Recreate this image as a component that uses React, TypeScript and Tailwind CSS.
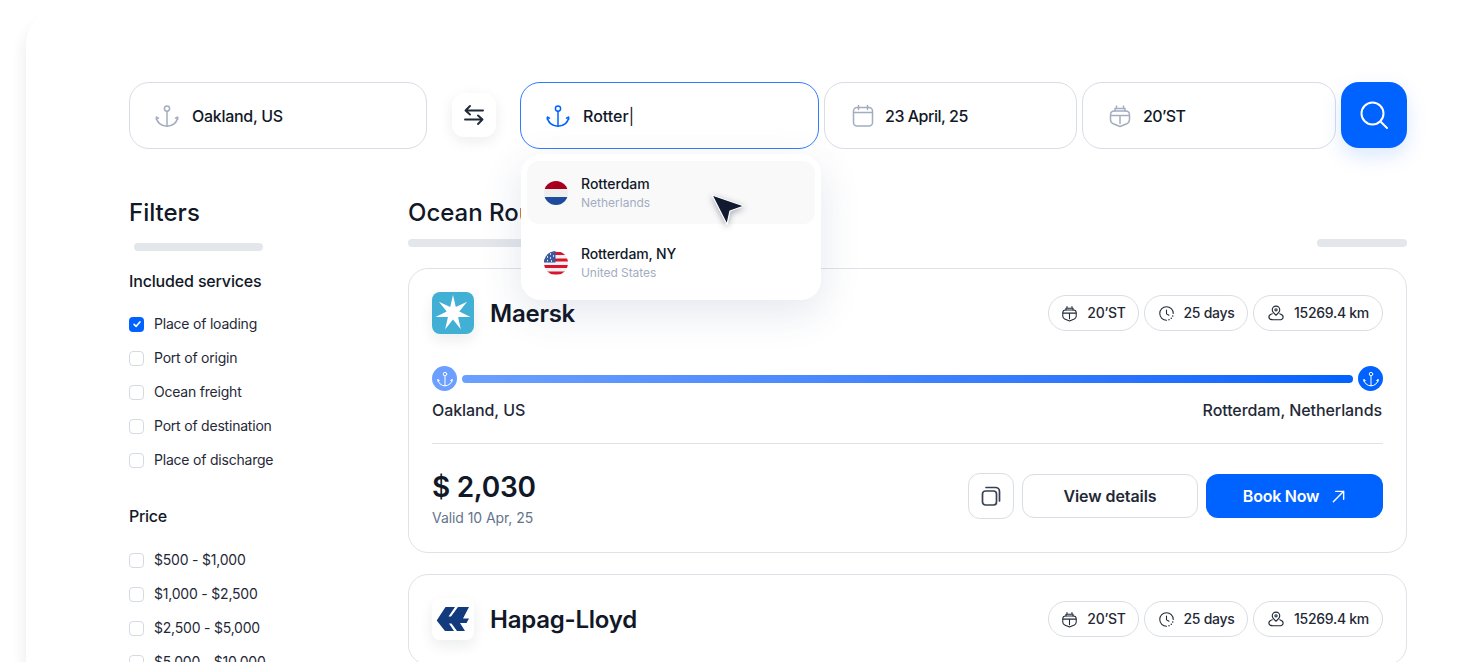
import React from "react";

type IP = { className?: string };
const Anchor = ({ className = "" }: IP) => (
  <svg viewBox="0 0 24 24" fill="none" stroke="currentColor" strokeWidth="1.5" strokeLinecap="round" strokeLinejoin="round" className={className}>
    <circle cx="12" cy="4.6" r="2.6" />
    <path d="M12 7.2V22.2" />
    <path d="M1.5 13.2a10.5 9 0 0 0 21 0" />
    <path d="M1.5 13.2l-.2 2M1.5 13.2l2 1M22.5 13.2l.2 2M22.5 13.2l-2 1" />
  </svg>
);
const Ship = ({ className = "" }: IP) => (
  <svg viewBox="0 0 24 24" fill="none" stroke="currentColor" strokeWidth="1.5" strokeLinecap="round" strokeLinejoin="round" className={className}>
    <path d="M2.500 11C2.500 8.500 4 7 6.500 7h11c2.500 0 4 1.500 4 4v4.500c0 2-1 3.400-2.700 4.200L12 22.500l-6.800-2.800C3.500 19 2.500 17.500 2.500 15.500z" />
    <path d="M7 7V4.500h10V7M8.500 2v2.500M15.500 2v2.500M12 11.500v8M3 11.500H21" />
  </svg>
);
const Calendar = ({ className = "" }: IP) => (
  <svg viewBox="0 0 24 24" fill="none" stroke="currentColor" strokeWidth="1.5" strokeLinecap="round" strokeLinejoin="round" className={className}>
    <rect x="2.500" y="3.500" width="19" height="18.500" rx="3.500" />
    <path d="M7.500 1.500v4M16.500 1.500v4M2.500 8.500h19" />
  </svg>
);
const ClockI = ({ className = "" }: IP) => (
  <svg viewBox="0 0 24 24" fill="none" stroke="currentColor" strokeWidth="1.5" strokeLinecap="round" strokeLinejoin="round" className={className}>
    <path d="M21.500 12A9.500 9.500 0 1 0 12 21.500" />
    <path d="M12 7v5.500l3.500 2" />
    <path d="M15.500 20.800l.1 0M18.700 18.700l.1 0M20.800 15.500l.1 0" strokeWidth="2" />
  </svg>
);
const Pin = ({ className = "" }: IP) => (
  <svg viewBox="0 0 24 24" fill="none" stroke="currentColor" strokeWidth="1.5" strokeLinecap="round" strokeLinejoin="round" className={className}>
    <path d="M12 15c-2.800-2.200-5-4.400-5-7.200a5 5 0 0 1 10 0c0 2.800-2.200 5-5 7.200z" />
    <circle cx="12" cy="7.800" r="1.500" />
    <path d="M7 13c-2.500.8-4.500 2.500-4.500 4.200C2.500 19.500 5 21 8 21h8c3 0 5.500-1.500 5.500-3.800C21.500 15.500 19.500 13.800 17 13" />
  </svg>
);

function Field({ icon, text, className, active, textClass = "" }: { icon: React.ReactNode; text: React.ReactNode; className: string; active?: boolean; textClass?: string }) {
  return (
    <div className={`flex h-[67px] items-center rounded-[20px] bg-white ${active ? "border-[1.5px] border-[#2f7bff]" : "border border-[#d8dce5]"} ${className}`}>
      {icon}
      <span className={`text-base font-medium text-[#111827] ${textClass}`}>{text}</span>
    </div>
  );
}

function Check({ label, checked }: { label: string; checked?: boolean }) {
  return (
    <div className="flex h-[34px] items-center gap-[10px]">
      {checked ? (
        <span className="flex h-[15px] w-[15px] items-center justify-center rounded-[4px] bg-[#0062ff]">
          <svg viewBox="0 0 12 12" className="h-[10px] w-[10px]" fill="none" stroke="white" strokeWidth="2" strokeLinecap="round" strokeLinejoin="round"><path d="M2.500 6.500 5 8.800 9.500 3.500" /></svg>
        </span>
      ) : (
        <span className="h-[15px] w-[15px] rounded-[4px] border border-[#d5d9e2] bg-white" />
      )}
      <span className="text-sm tracking-[-0.015em] text-[#1f2937]">{label}</span>
    </div>
  );
}

function Pills() {
  return (
    <div className="flex gap-[5px]">
      <div className="flex h-9 w-[91px] items-center justify-center gap-[9px] rounded-full border border-[#d9dde5] text-sm font-medium text-[#1f2937]"><Ship className="h-[17px] w-[17px]" />20’ST</div>
      <div className="flex h-9 w-[104px] items-center justify-center gap-[9px] rounded-full border border-[#d9dde5] text-sm font-medium text-[#1f2937]"><ClockI className="h-[17px] w-[17px]" />25 days</div>
      <div className="flex h-9 w-[130px] items-center justify-center gap-[9px] rounded-full border border-[#d9dde5] text-sm font-medium text-[#1f2937]"><Pin className="h-[18px] w-[18px]" />15269.4 km</div>
    </div>
  );
}

const Maersk = () => (
  <div className="flex h-[42px] w-[42px] items-center justify-center rounded-[8px] bg-[#42b0d5] shadow-[0_6px_14px_rgba(17,24,39,0.08)]">
    <svg viewBox="0 0 42 42" className="h-[42px] w-[42px]">
      <polygon fill="white" points="21,3 23.800,15.100 35.100,9.800 27.300,19.600 38.500,25 26.100,25.100 28.800,37.200 21,27.500 13.200,37.200 15.900,25.100 3.500,25 14.700,19.600 6.900,9.800 18.200,15.100" />
    </svg>
  </div>
);
const Hapag = () => (
  <div className="flex h-[42px] w-[42px] items-center justify-center rounded-[8px] bg-white shadow-[0_6px_14px_rgba(17,24,39,0.08)]">
    <svg viewBox="0 0 42 42" className="h-[42px] w-[42px]">
      <path fill="#123a7c" d="M4.700 22.500 13.500 9H23L16.500 18.500H19L26 9H37L31 20.500H37L34.500 25H28L33 33H25L19.500 25.500H17L22 33H13z" />
    </svg>
  </div>
);

function RouteCard({ logo, name, children }: { logo: React.ReactNode; name: string; children?: React.ReactNode }) {
  return (
    <div className="rounded-[20px] border border-[#dfe2e9] bg-white px-[23px] pt-[23px] pb-6">
      <div className="flex h-[42px] items-center">
        {logo}
        <span className="ml-4 mt-[2px] text-2xl font-semibold tracking-[-0.01em] text-[#111827]">{name}</span>
        <div className="ml-auto"><Pills /></div>
      </div>
      {children}
    </div>
  );
}

export default function App() {
  return (
    <div className="h-[662px] w-[1481px] overflow-hidden bg-white font-['Inter',sans-serif] tracking-[-0.018em]">
      <div className="relative ml-[26px] mt-[8px] h-[900px] w-[1500px] rounded-tl-[36px] bg-white pl-[103px] pt-[74px] shadow-[-5px_10px_12px_rgba(17,24,39,0.05)]">
        {/* search row */}
        <div className="flex items-start">
          <Field className="w-[298px] pl-[25px]" icon={<Anchor className="mr-[13px] h-6 w-6 text-[#a3adbf]" />} text="Oakland, US" />
          <div className="ml-[25px] mr-6 mt-[11px] flex h-[44px] w-[44px] items-center justify-center rounded-[12px] bg-white shadow-[0_4px_14px_rgba(17,24,39,0.08)]">
            <svg viewBox="0 0 24 24" className="h-6 w-6" fill="none" stroke="#1f2937" strokeWidth="1.900" strokeLinecap="round" strokeLinejoin="round"><path d="M21 7.500H3.500M8 3 3.500 7.500 8 11.500M3 16.500h17.500M16 12.500l4.500 4-4.500 4.500" /></svg>
          </div>
          <Field active className="w-[299px] pl-[25px]" textClass="tracking-normal" icon={<Anchor className="mr-[13px] h-6 w-6 text-[#0062ff]" />} text={<>Rotter<span className="font-normal">|</span></>} />
          <Field className="ml-[5px] w-[253px] pl-[26px]" textClass="tracking-[-0.03em]" icon={<Calendar className="mr-[10px] h-6 w-6 text-[#a3adbf]" />} text="23 April, 25" />
          <Field className="ml-[5px] w-[254px] pl-[25px]" textClass="tracking-[-0.04em]" icon={<Ship className="mr-[11px] h-6 w-6 text-[#a3adbf]" />} text="20’ST" />
          <div className="ml-[5px] flex h-[66px] w-[66px] items-center justify-center rounded-[18px] bg-[#0062ff] shadow-[0_8px_20px_rgba(0,98,255,0.15)]">
            <svg viewBox="0 0 32 32" className="h-8 w-8" fill="none" stroke="white" strokeWidth="2" strokeLinecap="round"><circle cx="14.500" cy="14.500" r="11" /><path d="M23 23l6 6" /></svg>
          </div>
        </div>

        {/* body */}
        <div className="mt-[46px] flex">
          <aside className="w-[279px] shrink-0">
            <h2 className="text-2xl leading-9 font-medium tracking-normal text-[#111827]">Filters</h2>
            <div className="ml-[5px] mt-[12px] h-2 w-[129px] rounded-full bg-[#e3e6eb]" />
            <h3 className="mt-[18px] text-base leading-6 font-medium tracking-[-0.01em] text-[#111827]">Included services</h3>
            <div className="mt-[14px]">
              <Check checked label="Place of loading" />
              <Check label="Port of origin" />
              <Check label="Ocean freight" />
              <Check label="Port of destination" />
              <Check label="Place of discharge" />
            </div>
            <h3 className="mt-[27px] text-base leading-6 font-medium text-[#111827]">Price</h3>
            <div className="mt-[15px]">
              <Check label="$500 - $1,000" />
              <Check label="$1,000 - $2,500" />
              <Check label="$2,500 - $5,000" />
              <Check label="$5,000 - $10,000" />
            </div>
          </aside>

          <main className="w-[999px] shrink-0">
            <h2 className="text-2xl leading-9 font-medium tracking-normal text-[#111827]">Ocean Routes</h2>
            <div className="mt-[8px] flex justify-between">
              <div className="h-2 w-[300px] rounded-full bg-[#e3e6eb]" />
              <div className="h-2 w-[90px] rounded-full bg-[#e3e6eb]" />
            </div>
            <div className="mt-[21px]">
              <RouteCard logo={<Maersk />} name="Maersk">
                <div className="mt-[32px] flex items-center gap-[5px]">
                  <span className="flex h-[25px] w-[25px] items-center justify-center rounded-full bg-[#6c9fff]"><Anchor className="h-4 w-4 text-white" /></span>
                  <div className="h-2 flex-1 rounded-full bg-gradient-to-r from-[#6c9fff] to-[#0062ff]" />
                  <span className="flex h-[25px] w-[25px] items-center justify-center rounded-full bg-[#0062ff]"><Anchor className="h-4 w-4 text-white" /></span>
                </div>
                <div className="mt-[7px] flex justify-between pr-px text-base leading-6 font-medium tracking-[-0.005em] text-[#1f2937]">
                  <span>Oakland, US</span>
                  <span>Rotterdam, Netherlands</span>
                </div>
                <div className="mt-[21px] h-px bg-[#dfe2e9]" />
                <div className="mt-[25px] flex items-start">
                  <div>
                    <div className="text-[28px] leading-9 font-semibold text-[#111827]">$ 2,030</div>
                    <div className="mt-[3px] text-sm leading-5 tracking-[-0.005em] text-[#64748b]">Valid 10 Apr, 25</div>
                  </div>
                  <div className="ml-auto mt-[4px] flex items-center gap-2">
                    <button className="flex h-[46px] w-[46px] items-center justify-center rounded-[12px] border border-[#d9dde5] bg-white">
                      <svg viewBox="0 0 24 24" className="h-6 w-6" fill="none" stroke="#374151" strokeWidth="1.700" strokeLinecap="round" strokeLinejoin="round"><rect x="3.500" y="7" width="14" height="14" rx="3" /><path d="M7 3.500h9.500a4 4 0 0 1 4 4V17" /></svg>
                    </button>
                    <button className="h-[44px] w-[176px] rounded-[12px] border border-[#d9dde5] bg-white text-base font-semibold tracking-[-0.005em] text-[#1f2937]">View details</button>
                    <button className="flex h-[44px] w-[177px] items-center justify-center gap-[12px] rounded-[12px] bg-[#0062ff] text-base font-semibold tracking-[-0.015em] text-white">
                      Book Now
                      <svg viewBox="0 0 16 16" className="h-[15px] w-[15px]" fill="none" stroke="white" strokeWidth="1.500" strokeLinecap="round" strokeLinejoin="round"><path d="M2.500 13.500 13.500 2.500M5 2.500h8.500V11" /></svg>
                    </button>
                  </div>
                </div>
              </RouteCard>
              <div className="mt-[21px]">
                <RouteCard logo={<Hapag />} name="Hapag-Lloyd" />
              </div>
            </div>
          </main>
        </div>

        {/* dropdown */}
        <div className="absolute left-[495px] top-[146px] h-[146px] w-[300px] rounded-[20px] bg-white px-[6px] pt-[7px] shadow-[0_12px_40px_rgba(52,72,120,0.13)]">
          <div className="flex h-[63px] items-center rounded-[12px] bg-[#f9f9fa] pl-[17px]">
            <svg viewBox="0 0 24 24" className="h-6 w-6 shrink-0">
              <defs><clipPath id="nl"><circle cx="12" cy="12" r="12" /></clipPath></defs>
              <g clipPath="url(#nl)"><rect width="24" height="8" fill="#a6001e" /><rect y="8" width="24" height="8" fill="#eeeeee" /><rect y="16" width="24" height="8" fill="#1f4b9c" /></g>
            </svg>
            <div className="ml-[13px]">
              <div className="text-sm leading-5 font-medium tracking-normal text-[#111827]">Rotterdam</div>
              <div className="text-xs leading-[18px] tracking-normal text-[#a3adbf]">Netherlands</div>
            </div>
          </div>
          <div className="mt-[7px] flex h-[63px] items-center pl-[17px]">
            <svg viewBox="0 0 24 24" className="h-6 w-6 shrink-0">
              <defs><clipPath id="us"><circle cx="12" cy="12" r="12" /></clipPath></defs>
              <g clipPath="url(#us)">
                <rect width="24" height="24" fill="#f1f1f1" />
                <rect y="1" width="24" height="3" fill="#d8142f" /><rect y="7.500" width="24" height="3" fill="#d8142f" /><rect y="14" width="24" height="3" fill="#d8142f" /><rect y="20.500" width="24" height="3" fill="#d8142f" />
                <rect width="11.500" height="11.500" fill="#3a5a9f" />
                <path d="M3 6h1M6 3h1M6 7h1M9 5h1M3 9.500h1M7 10h1" stroke="white" strokeWidth="1.300" />
              </g>
            </svg>
            <div className="ml-[13px]">
              <div className="text-sm leading-5 font-medium tracking-[-0.01em] text-[#111827]">Rotterdam, NY</div>
              <div className="text-xs leading-[18px] tracking-[-0.005em] text-[#a3adbf]">United States</div>
            </div>
          </div>
        </div>

        {/* cursor */}
        <svg viewBox="0 0 40 40" className="absolute left-[683px] top-[183px] h-10 w-10 drop-shadow-[0_2px_3px_rgba(17,24,39,0.35)]">
          <path d="M3 4 35 15 21 20 18 33.500z" fill="#111a2e" stroke="white" strokeWidth="1.200" strokeLinejoin="round" />
        </svg>
      </div>
    </div>
  );
}
